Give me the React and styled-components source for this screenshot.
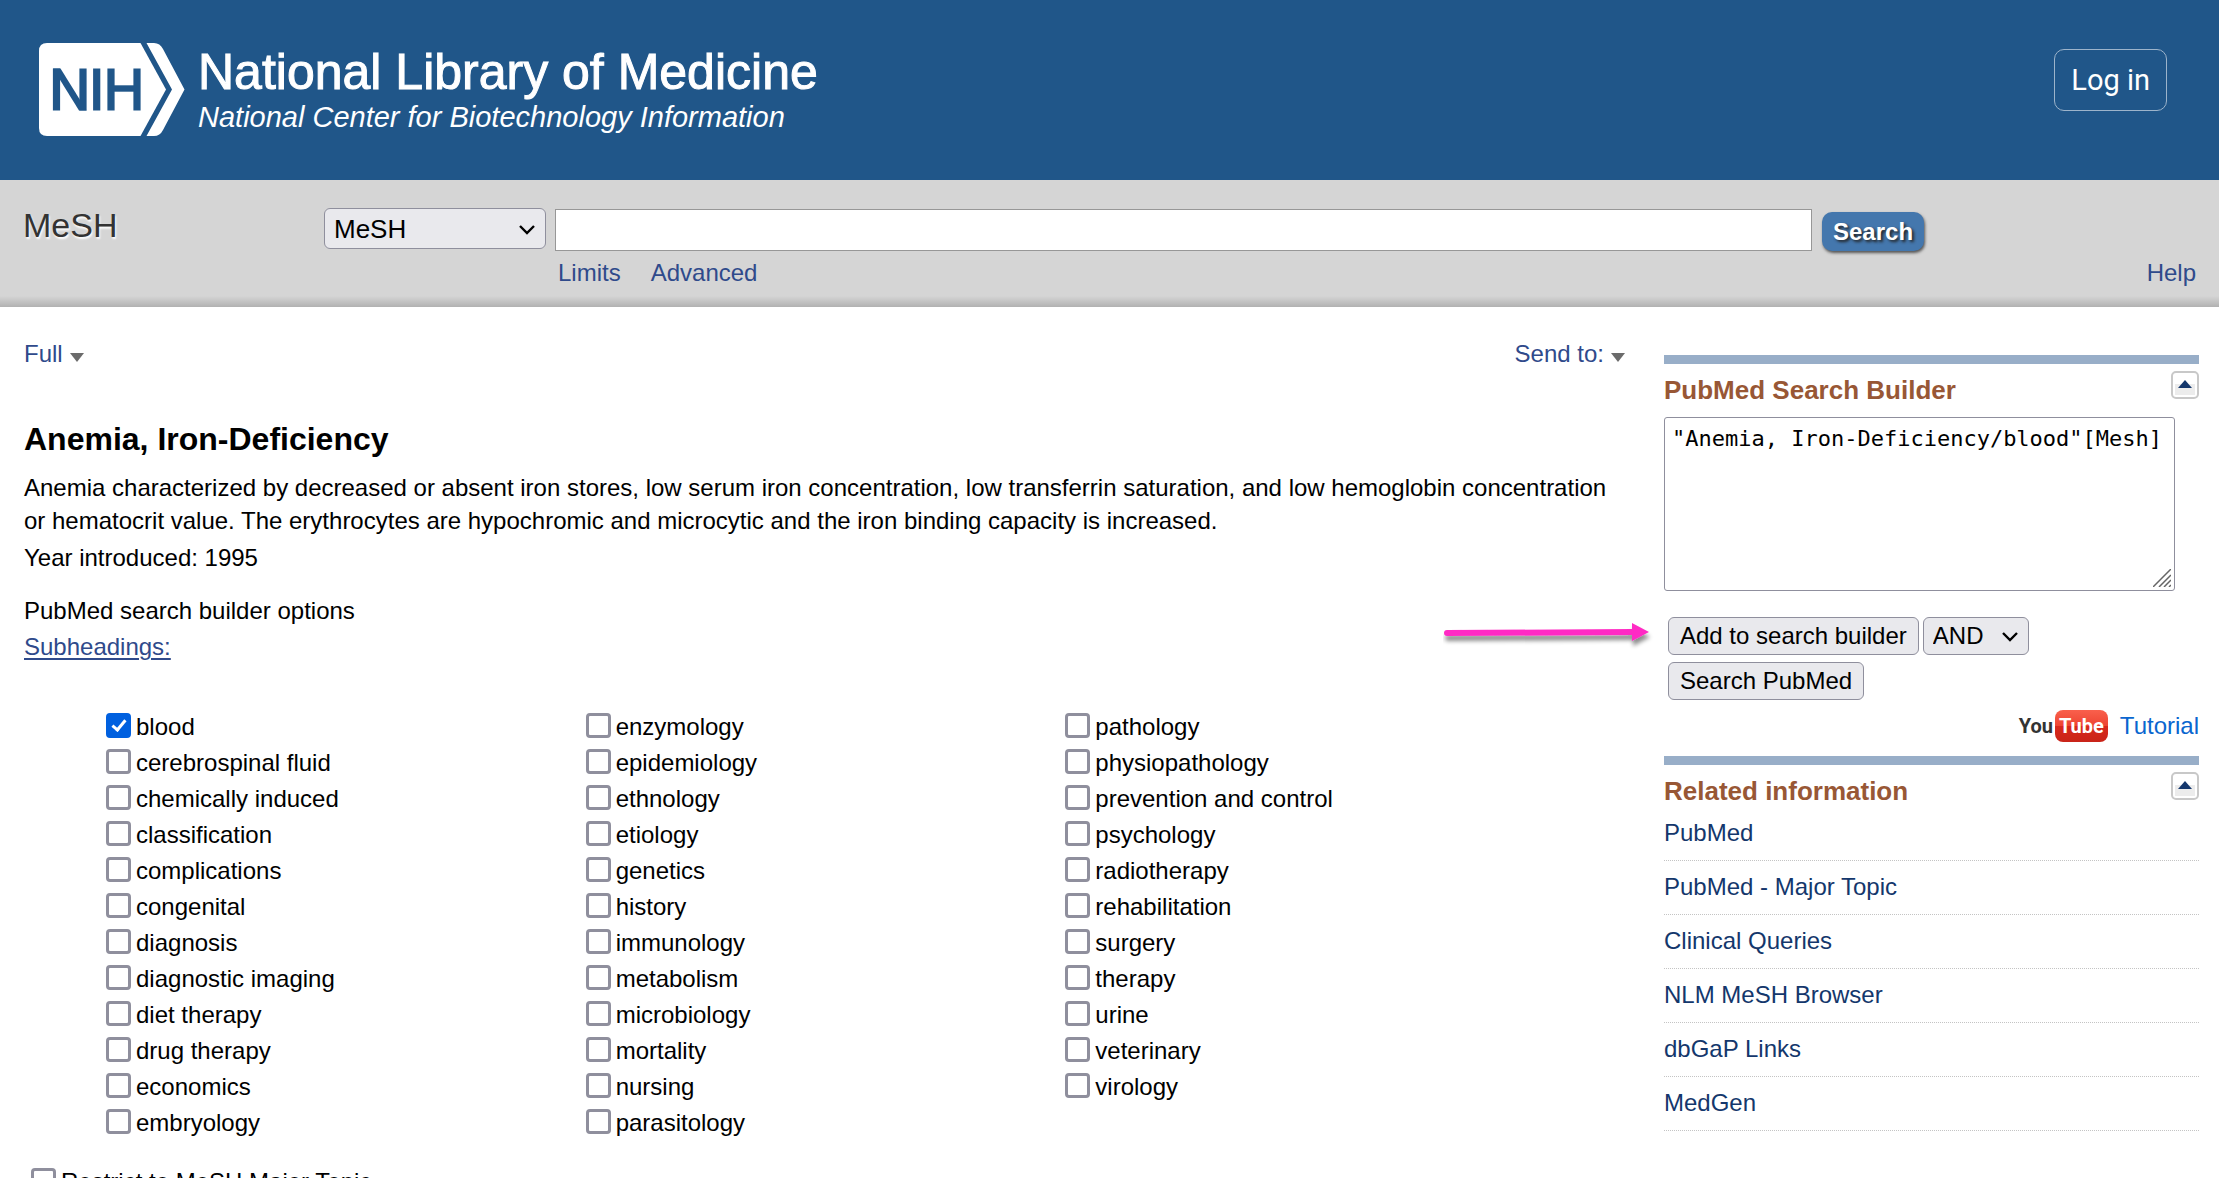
import React, { useId, useState } from "react";
import styled, { createGlobalStyle } from "styled-components";

const sans = `"Liberation Sans", Arial, Helvetica, sans-serif`;
const link = "#2f4a8b";

const GlobalStyle = createGlobalStyle`
  *, *::before, *::after { box-sizing: border-box; }
  body { margin: 0; background: #fff; color: #000; font: 24px/32px ${sans}; }
  button, input, select, textarea { font: inherit; color: inherit; margin: 0; }
  h1, h2, p, ul { margin: 0; padding: 0; }
  ul { list-style: none; }
  a { text-decoration: none; }
`;

const Page = styled.div`
  height: 100vh;
  overflow: hidden;
`;

const Header = styled.header`
  display: flex;
  align-items: flex-start;
  justify-content: space-between;
  height: 180px;
  padding: 43px 52px 0 39px;
  background: #205689;
`;

const Brand = styled.a`
  display: flex;
  gap: 12px;
  color: #fff;
`;

const BrandText = styled.span`
  display: flex;
  flex-direction: column;
`;

const BrandName = styled.span`
  font-size: 50px;
  line-height: 58px;
  -webkit-text-stroke: 1px #fff;
`;

const BrandUnit = styled.span`
  font-size: 29px;
  line-height: 32px;
  font-style: italic;
`;

const LoginButton = styled.button`
  height: 62px;
  margin-top: 6px;
  padding: 0 16px;
  border: 1px solid #9db4cb;
  border-radius: 10px;
  background: transparent;
  color: #fff;
  font: 29px/40px Roboto, sans-serif;
`;

const SearchBar = styled.form`
  display: grid;
  grid-template-columns: 292px 222px minmax(0, 1257px) minmax(110px, 1fr);
  column-gap: 9px;
  align-items: start;
  height: 127px;
  padding: 28px 23px 0;
  margin: 0;
  background: linear-gradient(to bottom, rgba(0, 0, 0, 0) 116px, rgba(0, 0, 0, 0.17) 127px), #d5d5d5;
`;

const DatabaseTitle = styled.span`
  color: #333;
  font-size: 34px;
  line-height: 34px;
  text-shadow: 1px 2px 2px #fff;
`;

const SelectBox = styled.span`
  position: relative;
  display: block;
  svg {
    position: absolute;
    right: 10px;
    top: 50%;
    margin-top: -5px;
    pointer-events: none;
  }
`;

const SelectField = styled.select`
  appearance: none;
  display: block;
  width: ${(p) => p.$width}px;
  height: ${(p) => p.$height}px;
  padding: 0 9px;
  border: 1px solid #8f8f9d;
  border-radius: 6px;
  background: #e9e9ed;
  font-size: ${(p) => p.$size}px;
`;

const QueryColumn = styled.div`
  display: flex;
  flex-direction: column;
  gap: 6px;
  padding-top: 1px;
`;

const QueryInput = styled.input`
  width: 100%;
  height: 42px;
  padding: 0 8px;
  border: 1px solid #979797;
  border-radius: 0;
  background: #fff;
`;

const QueryLinks = styled.nav`
  display: flex;
  gap: 30px;
  padding-left: 3px;
`;

const TextLink = styled.a`
  color: ${link};
`;

const ActionColumn = styled.div`
  display: flex;
  flex-direction: column;
  align-items: flex-start;
  gap: 6px;
  padding: 4px 0 0 1px;
`;

const SearchButton = styled.button`
  height: 39px;
  padding: 0 11px;
  border: 0;
  border-radius: 10px;
  background: #4477ad;
  box-shadow: 1px 2px 3px #555;
  color: #fff;
  font-weight: bold;
  text-shadow: 2px 2px 3px #222;
`;

const HelpLink = styled(TextLink)`
  align-self: flex-end;
`;

const Content = styled.div`
  display: flex;
  gap: 33px;
  padding: 31px 20px 0 24px;
`;

const Main = styled.main`
  flex: 1;
  min-width: 0;
`;

const DisplayBar = styled.div`
  display: flex;
  justify-content: space-between;
  padding-right: 6px;
`;

const MenuLink = styled.a`
  display: flex;
  align-items: center;
  gap: 7px;
  color: ${link};
  svg { margin-top: 6px; }
`;

const Heading = styled.h1`
  margin-top: 49px;
  font-size: 32px;
  line-height: 40px;
`;

const Description = styled.p`
  margin-top: 12px;
  line-height: 33px;
`;

const Line = styled.p`
  margin-top: ${(p) => p.$gap}px;
`;

const SubheadingsLink = styled(TextLink)`
  text-decoration: underline;
  text-decoration-thickness: 2px;
  text-underline-offset: 3px;
`;

const CheckGrid = styled.div`
  display: grid;
  grid-template-columns: repeat(3, 1fr);
  margin: 48px 86px 0 82px;
`;

const CheckRow = styled.label`
  display: flex;
  align-items: flex-start;
  gap: 5px;
  height: 36px;
`;

const CheckBox = styled.input`
  appearance: none;
  display: grid;
  place-items: center;
  flex: none;
  width: 25px;
  height: 25px;
  margin-top: 2px;
  border: 2px solid #8f8f9d;
  border-width: 3px;
  border-radius: 4px;
  background: #fff;
  &:checked {
    border-color: #0060df;
    background: #0060df;
  }
  &:checked::after {
    content: "";
    width: 8px;
    height: 14px;
    margin-bottom: 4px;
    border: solid #fff;
    border-width: 0 3px 3px 0;
    transform: rotate(40deg);
  }
`;

const Restrict = styled.div`
  padding: 23px 0 0 7px;
`;

const Aside = styled.aside`
  flex: none;
  width: 535px;
  padding-top: 17px;
`;

const Portlet = styled.section`
  border-top: 9px solid #98aec8;
`;

const PortletHead = styled.div`
  display: flex;
  align-items: flex-start;
  justify-content: space-between;
  padding-top: 7px;
`;

const PortletTitle = styled.h2`
  padding-top: 3px;
  color: #985735;
  font-size: 26px;
  line-height: 32px;
`;

const Toggle = styled.button`
  display: flex;
  padding: 0;
  border: 0;
  background: none;
`;

const BuilderBox = styled.div`
  position: relative;
  width: 511px;
  margin-top: 11px;
  svg {
    position: absolute;
    right: 4px;
    bottom: 4px;
    pointer-events: none;
  }
`;

const BuilderText = styled.textarea`
  display: block;
  width: 100%;
  height: 174px;
  padding: 6px 7px;
  border: 1px solid #8f8f9d;
  border-radius: 3px;
  background: #fff;
  resize: none;
  overflow: hidden;
  font: 22px/30px "DejaVu Sans Mono", monospace;
`;

const BuilderActions = styled.div`
  position: relative;
  display: flex;
  flex-wrap: wrap;
  gap: 7px 4px;
  margin-top: 26px;
  padding: 0 100px 0 4px;
`;

const Pointer = styled.svg`
  position: absolute;
  right: 100%;
  top: 0;
  margin-right: 6px;
`;

const GreyButton = styled.button`
  height: 38px;
  padding: 0 11px;
  border: 1px solid #8f8f9d;
  border-radius: 6px;
  background: #e9e9ed;
`;

const Tutorial = styled.div`
  display: flex;
  align-items: center;
  justify-content: flex-end;
  gap: 12px;
  padding: 10px 0 14px;
`;

const TutorialLink = styled.a`
  color: #0a66cf;
`;

const YouTube = styled.span`
  display: flex;
  align-items: center;
  gap: 2px;
  height: 32px;
  font: bold 20px/32px Roboto, sans-serif;
  color: #333;
`;

const Tube = styled.span`
  height: 32px;
  padding: 0 4px;
  border-radius: 8px;
  background: linear-gradient(#f9604c, #ee4533 49%, #d8291c 50%, #c92419);
  color: #fff;
`;

const LinkList = styled.ul`
  display: block;
`;

const LinkItem = styled.li`
  height: 54px;
  padding-top: 10px;
  border-bottom: 1px dotted #c4c4c4;
  a { color: #14376c; }
`;

function NihMark() {
  return (
    <svg width="147" height="94" viewBox="0 0 147 94" aria-hidden="true">
      <path d="M8 0H101.500L127 46.500L101.500 93H8Q0 93 0 85V8Q0 0 8 0Z" fill="#fff" />
      <path d="M107.500 0H115Q121 0 124 6L145.500 46.500L124 87Q121 93 115 93H107.500L133 46.500Z" fill="#fff" />
      <g fill="none" stroke="#205689" strokeWidth="7.200">
        <path d="M17.500 67.500V25.500M44 67.500V25.500M57.700 67.500V25.500M72 67.500V25.500M98 67.500V25.500" />
        <path d="M72 45.500H98" strokeWidth="6.400" />
        <path d="M14 25.500H21.500L47.600 67.500H40Z" fill="#205689" stroke="none" />
      </g>
    </svg>
  );
}

function Chevron() {
  return (
    <svg width="18" height="12" viewBox="0 0 18 12" aria-hidden="true">
      <path d="M2 2L9 9L16 2" fill="none" stroke="#000" strokeWidth="2.400" />
    </svg>
  );
}

function Caret() {
  return (
    <svg width="14" height="9" viewBox="0 0 14 9" aria-hidden="true">
      <path d="M0 0H14L7 9Z" fill="#6b6b6b" />
    </svg>
  );
}

function Select({ label, options, width, height, size }) {
  return (
    <SelectBox>
      <SelectField aria-label={label} $width={width} $height={height} $size={size}>
        {options.map((o) => (
          <option key={o}>{o}</option>
        ))}
      </SelectField>
      <Chevron />
    </SelectBox>
  );
}

function Check({ label, checked: initial = false }) {
  const id = useId();
  const [checked, setChecked] = useState(initial);
  return (
    <CheckRow htmlFor={id}>
      <CheckBox id={id} type="checkbox" checked={checked} onChange={(e) => setChecked(e.target.checked)} />
      <span>{label}</span>
    </CheckRow>
  );
}

function PortletHeader({ title }) {
  return (
    <PortletHead>
      <PortletTitle>{title}</PortletTitle>
      <Toggle type="button" aria-label={`Collapse ${title}`}>
        <svg width="28" height="28" viewBox="0 0 28 28" aria-hidden="true">
          <rect x="1" y="1" width="26" height="26" rx="4" fill="#fff" stroke="#c8c8c8" strokeWidth="2" />
          <rect x="4" y="13" width="20" height="11" fill="#ececec" />
          <path d="M14 9L21 17H7Z" fill="#14376c" />
        </svg>
      </Toggle>
    </PortletHead>
  );
}

const columns = [
  ["blood", "cerebrospinal fluid", "chemically induced", "classification", "complications", "congenital", "diagnosis", "diagnostic imaging", "diet therapy", "drug therapy", "economics", "embryology"],
  ["enzymology", "epidemiology", "ethnology", "etiology", "genetics", "history", "immunology", "metabolism", "microbiology", "mortality", "nursing", "parasitology"],
  ["pathology", "physiopathology", "prevention and control", "psychology", "radiotherapy", "rehabilitation", "surgery", "therapy", "urine", "veterinary", "virology"],
];

const related = ["PubMed", "PubMed - Major Topic", "Clinical Queries", "NLM MeSH Browser", "dbGaP Links", "MedGen"];

export default function App() {
  return (
    <Page>
      <GlobalStyle />
      <Header>
        <Brand href="#home">
          <NihMark />
          <BrandText>
            <BrandName>National Library of Medicine</BrandName>
            <BrandUnit>National Center for Biotechnology Information</BrandUnit>
          </BrandText>
        </Brand>
        <LoginButton type="button">Log in</LoginButton>
      </Header>

      <SearchBar role="search" onSubmit={(e) => e.preventDefault()}>
        <DatabaseTitle>MeSH</DatabaseTitle>
        <Select label="Database" options={["MeSH", "PubMed"]} width={222} height={41} size={26} />
        <QueryColumn>
          <QueryInput type="text" aria-label="Search term" />
          <QueryLinks>
            <TextLink href="#limits">Limits</TextLink>
            <TextLink href="#advanced">Advanced</TextLink>
          </QueryLinks>
        </QueryColumn>
        <ActionColumn>
          <SearchButton type="submit">Search</SearchButton>
          <HelpLink href="#help">Help</HelpLink>
        </ActionColumn>
      </SearchBar>

      <Content>
        <Main>
          <DisplayBar>
            <MenuLink href="#format">Full<Caret /></MenuLink>
            <MenuLink href="#send">Send to:<Caret /></MenuLink>
          </DisplayBar>
          <Heading>Anemia, Iron-Deficiency</Heading>
          <Description>
            Anemia characterized by decreased or absent iron stores, low serum iron concentration, low transferrin
            saturation, and low hemoglobin concentration or hematocrit value. The erythrocytes are hypochromic and
            microcytic and the iron binding capacity is increased.
          </Description>
          <Line $gap={5}>Year introduced: 1995</Line>
          <Line $gap={21}>PubMed search builder options</Line>
          <Line $gap={4}>
            <SubheadingsLink href="#subheadings">Subheadings:</SubheadingsLink>
          </Line>
          <CheckGrid>
            {columns.map((names) => (
              <div key={names[0]}>
                {names.map((name) => (
                  <Check key={name} label={name} checked={name === "blood"} />
                ))}
              </div>
            ))}
          </CheckGrid>
          <Restrict>
            <Check label="Restrict to MeSH Major Topic." />
          </Restrict>
        </Main>

        <Aside>
          <Portlet>
            <PortletHeader title="PubMed Search Builder" />
            <BuilderBox>
              <BuilderText aria-label="Search builder query" defaultValue={'"Anemia, Iron-Deficiency/blood"[Mesh]'} />
              <svg width="18" height="18" viewBox="0 0 18 18" aria-hidden="true">
                <path d="M0 18L18 0M6 18L18 6M11 18L18 11M16 18L18 16" stroke="#666" strokeWidth="1.500" />
              </svg>
            </BuilderBox>
            <BuilderActions>
              <Pointer width="215" height="38" viewBox="0 0 215 38" aria-hidden="true">
                <defs>
                  <filter id="pointer-shadow" x="-10%" y="-50%" width="120%" height="250%">
                    <feDropShadow dx="1" dy="5" stdDeviation="2" floodColor="#000" floodOpacity="0.45" />
                  </filter>
                </defs>
                <path
                  d="M4 13L189 12V6L206 15L189 24V18L4 19Q1 19 1 16Q1 13 4 13Z"
                  fill="#ff2cc4"
                  filter="url(#pointer-shadow)"
                />
              </Pointer>
              <GreyButton type="button">Add to search builder</GreyButton>
              <Select label="Operator" options={["AND", "OR", "NOT"]} width={106} height={38} size={24} />
              <GreyButton type="button">Search PubMed</GreyButton>
            </BuilderActions>
            <Tutorial>
              <YouTube>You<Tube>Tube</Tube></YouTube>
              <TutorialLink href="#tutorial">Tutorial</TutorialLink>
            </Tutorial>
          </Portlet>
          <Portlet>
            <PortletHeader title="Related information" />
            <LinkList>
              {related.map((name) => (
                <LinkItem key={name}>
                  <a href="#related">{name}</a>
                </LinkItem>
              ))}
            </LinkList>
          </Portlet>
        </Aside>
      </Content>
    </Page>
  );
}
